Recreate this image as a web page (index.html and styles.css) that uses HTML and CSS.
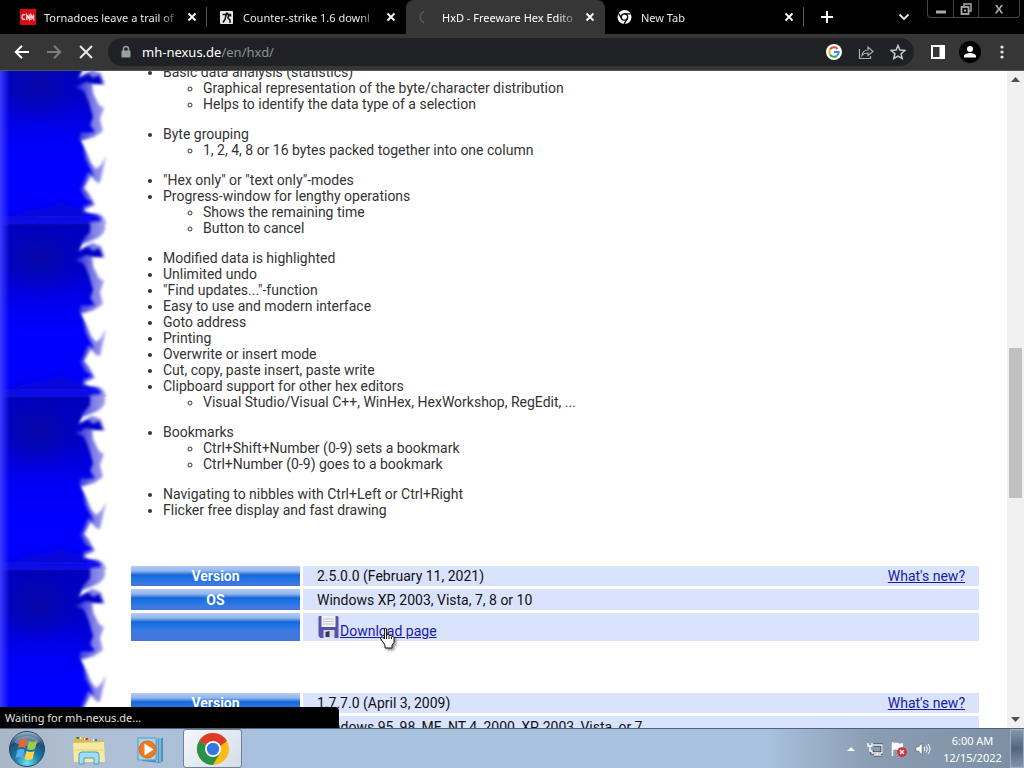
FILE: index.html
```html
<!DOCTYPE html>
<html lang="en">

<head>
    <meta charset="UTF-8">
    <meta name="viewport" content="width=device-width, initial-scale=1.0">
    <title>HxD - Freeware Hex Editor</title>
    <link rel="stylesheet" href="styles.css">
</head>

<body>
    <!-- tabs -->
    <header class="tabstrip">
        <div class="tab line">
            <svg class="favicon" viewBox="0 0 16 16"><rect width="16" height="16" fill="#d80a14"/><g fill="none" stroke="#ffd9d9" stroke-width="1.400"><path d="M5.200 5.800C3 5 2 6.500 2 8s1 3 3.200 2.200"/><path d="M6.800 11V6l2.500 4V5.500M11 11V6l2.500 4V5.500"/></g></svg>
            <span class="title">Tornadoes leave a trail of</span>
            <button class="close" aria-label="Close tab"><svg viewBox="0 0 10 10"><path d="M1.500 1.500l7 7M8.500 1.500l-7 7"/></svg></button>
        </div>
        <div class="tab">
            <svg class="favicon" viewBox="0 0 16 16"><rect x="1" y="2" width="13" height="13" rx="1" fill="#e8e8e8"/><circle cx="8" cy="4.500" r="1.300" fill="#111"/><path d="M3.500 5.500h8v1.300H9.500L9 9l2 2v3M7 6l-.8 4L4 13.500" fill="none" stroke="#111" stroke-width="1.500"/></svg>
            <span class="title">Counter-strike 1.6 downl</span>
            <button class="close" aria-label="Close tab"><svg viewBox="0 0 10 10"><path d="M1.500 1.500l7 7M8.500 1.500l-7 7"/></svg></button>
        </div>
        <div class="tab active">
            <svg class="favicon" viewBox="0 0 16 16"><path d="M6 2.500C1 5 1 11 6 14" fill="none" stroke="#55585c" stroke-width="1.500"/></svg>
            <span class="title">HxD - Freeware Hex Edito</span>
            <button class="close" aria-label="Close tab"><svg viewBox="0 0 10 10"><path d="M1.500 1.500l7 7M8.500 1.500l-7 7"/></svg></button>
        </div>
        <div class="tab line">
            <svg class="favicon" viewBox="0 0 16 16"><circle cx="7.500" cy="8" r="7" fill="#fff"/><circle cx="7.500" cy="8" r="3.200" fill="#fff" stroke="#000" stroke-width="1.300"/><path d="M7.500 4.800h6.200M4.700 9.600L1.600 4.300M10.300 9.600l-3.200 5.300" stroke="#000" stroke-width="1.300"/></svg>
            <span class="title">New Tab</span>
            <button class="close" aria-label="Close tab"><svg viewBox="0 0 10 10"><path d="M1.500 1.500l7 7M8.500 1.500l-7 7"/></svg></button>
        </div>
        <button class="newTab" aria-label="New tab"><svg viewBox="0 0 14 14"><path d="M7 1v12M1 7h12" stroke="#fff" stroke-width="2"/></svg></button>
        <button class="search" aria-label="Search tabs"><svg viewBox="0 0 12 12"><path d="M1.500 3.500L6 8l4.500-4.500" fill="none" stroke="#e8e8e8" stroke-width="1.800"/></svg></button>
        <div class="winBtns">
            <button aria-label="Minimize"><svg viewBox="0 0 14 14"><path d="M2 10h10" stroke="#aaa" stroke-width="3"/></svg></button>
            <button aria-label="Restore"><svg viewBox="0 0 14 14"><path d="M5 4V2h7v7h-2" fill="none" stroke="#aaa" stroke-width="1.500"/><rect x="2.500" y="5" width="7" height="7" fill="none" stroke="#aaa" stroke-width="1.800"/><rect x="5" y="7.500" width="2" height="2" fill="#aaa"/></svg></button>
            <button class="wide" aria-label="Close"><svg viewBox="0 0 14 14"><path d="M3 3h2l2 3 2-3h2L8.200 7l3 4.500h-2L7 8.300l-2.200 3.200h-2L5.800 7z" fill="#aaa"/></svg></button>
        </div>
    </header>

    <!-- toolbar -->
    <nav class="toolbar">
        <button class="tool" aria-label="Back"><svg viewBox="0 0 16 16"><path d="M15 8H2M8 1.800L1.800 8 8 14.200" fill="none" stroke="#fff" stroke-width="2"/></svg></button>
        <button class="tool" aria-label="Forward"><svg viewBox="0 0 16 16"><path d="M1 8h13M8 1.800L14.200 8 8 14.200" fill="none" stroke="#7d7d7d" stroke-width="2"/></svg></button>
        <button class="tool" aria-label="Stop"><svg viewBox="0 0 16 16"><path d="M2 2l12 12M14 2L2 14" stroke="#e8e8e8" stroke-width="2"/></svg></button>
        <div class="omnibox">
            <svg class="lock" viewBox="0 0 12 14"><path d="M3.500 6V4a2.500 2.500 0 0 1 5 0v2" fill="none" stroke="#9a9da1" stroke-width="1.500"/><rect x="1.500" y="5.500" width="9" height="7" rx="1" fill="#9a9da1"/></svg>
            <a class="url" href="#"><b>mh-nexus.de</b>/en/hxd/</a>
            <button class="tool" aria-label="Google search"><svg viewBox="0 0 16 16"><circle cx="8" cy="8" r="8" fill="#fff"/><g fill="none" stroke-width="2"><path d="M11.500 4.700A4.800 4.800 0 0 0 4 5.500" stroke="#ea4335"/><path d="M4 5.500a4.800 4.800 0 0 0 0 5" stroke="#fbbc05"/><path d="M4 10.500a4.800 4.800 0 0 0 7 1.200" stroke="#34a853"/><path d="M11 11.700A4.700 4.700 0 0 0 12.700 8H8" stroke="#4285f4"/></g></svg></button>
            <button class="tool" aria-label="Share"><svg viewBox="0 0 16 16"><path d="M1.500 5v9.500h11V12M4 11.500c.5-4 3-5.500 6-5.500V3l5 4.500-5 4V9C7.500 9 5.500 9.500 4 11.500z" fill="none" stroke="#aaadb1" stroke-width="1.200"/></svg></button>
            <button class="tool" aria-label="Bookmark"><svg viewBox="0 0 16 16"><path d="M8 1.500l1.900 4.600 4.900.4-3.700 3.200 1.100 4.800L8 12l-4.200 2.500 1.100-4.800L1.200 6.500l4.900-.4z" fill="none" stroke="#c6c8cb" stroke-width="1.500"/></svg></button>
        </div>
        <button class="tool" aria-label="Side panel"><svg viewBox="0 0 16 16"><path d="M1 1h14v14H1zM3 3v10h6.500V3z" fill="#fff" fill-rule="evenodd"/></svg></button>
        <button class="tool" aria-label="Profile"><svg class="avatar" viewBox="0 0 22 22"><circle cx="11" cy="11" r="11"/><circle cx="11" cy="8" r="3" fill="#fff"/><path d="M5 16.500v-1.500c0-2 4-3 6-3s6 1 6 3v1.500z" fill="#fff"/></svg></button>
        <button class="tool" aria-label="Menu"><svg viewBox="0 0 16 16"><g fill="#e8e8e8"><circle cx="8" cy="3" r="1.600"/><circle cx="8" cy="8" r="1.600"/><circle cx="8" cy="13" r="1.600"/></g></svg></button>
    </nav>

    <!-- web page -->
    <div class="viewport">
        <svg class="flames" aria-hidden="true">
            <defs>
                <linearGradient id="down" x1="0" y1="0" x2="0" y2="1">
                    <stop offset="0" stop-color="#0a0ad8"/>
                    <stop offset=".06" stop-color="#0505c0"/>
                    <stop offset=".28" stop-color="#0404c8"/>
                    <stop offset=".5" stop-color="#0202f4"/>
                    <stop offset=".65" stop-color="#0000ff"/>
                    <stop offset=".9" stop-color="#0202fa"/>
                    <stop offset=".95" stop-color="#1212e4"/>
                    <stop offset="1" stop-color="#0808c0"/>
                </linearGradient>
                <linearGradient id="halo" gradientUnits="userSpaceOnUse" x1="78" y1="0" x2="108" y2="0">
                    <stop offset="0" stop-color="#3030dd"/>
                    <stop offset=".5" stop-color="#7c7ce6"/>
                    <stop offset="1" stop-color="#a8a8ee"/>
                </linearGradient>
                <radialGradient id="shade">
                    <stop offset="0" stop-color="#0808a0" stop-opacity=".8"/>
                    <stop offset="1" stop-color="#0808b0" stop-opacity="0"/>
                </radialGradient>
                <linearGradient id="left">
                    <stop offset="0" stop-color="#3c3cff"/>
                    <stop offset=".5" stop-color="#3030ff" stop-opacity=".6"/>
                    <stop offset="1" stop-color="#2020ff" stop-opacity="0"/>
                </linearGradient>
                <filter id="soft" x="-20%" y="-20%" width="140%" height="140%"><feGaussianBlur stdDeviation="1.500"/></filter>
                <filter id="softer" x="-50%" y="-50%" width="200%" height="200%"><feGaussianBlur stdDeviation="2.500"/></filter>
                <pattern id="tile" width="120" height="173" y="-20" patternUnits="userSpaceOnUse">
                    <rect width="120" height="173" fill="#fff"/>
                    <!-- pale halo, then the solid flame -->
                    <path filter="url(#soft)" fill="url(#halo)" d="M-9-8H105V6Q102 13 93 16L82 20 77 28 92 19 101 22 105 34 92 30 93 42 99 54 104 57 100 68 103 80 94 86 80 90 86 100 91 112 96 118 101 114 106 105 100 132 96 131 91 125 84 137 89 143 95 154 83 159 90 163Q108 160 106 180H-9z"/>
                    <path filter="url(#soft)" fill="url(#down)" d="M-9-8H90L90 8 82 17 78 28 88 23 93 27 99 24 103 33 94 33 86 31 75 36 84 40 89 52 93 66 90 74 95 81 86 82 81 81 79 87 83 96 85 108 90 117 94 125 88 121 85 128 80 138 85 147 93 152 83 155 82 162Q102 163 101 170L90 171 89 181H-9z"/>
                    <ellipse cx="38" cy="34" rx="46" ry="40" fill="url(#shade)"/>
                    <path filter="url(#softer)" fill="#1010bb" opacity=".5" d="M0 166Q30 159 54 155L60 150 67 155 84 158V167z"/>
                    <path d="M8 0H88" stroke="#0505a0" stroke-width="3" opacity=".6"/>
                    <rect width="10" height="173" fill="url(#left)"/>
                </pattern>
            </defs>
            <rect width="120" height="100%" fill="url(#tile)"/>
        </svg>
        <main class="content">
            <ul>
                <li>Basic data analysis (statistics)
                    <ul>
                        <li>Graphical representation of the byte/character distribution</li>
                        <li>Helps to identify the data type of a selection</li>
                    </ul>
                </li>
                <li>Byte grouping
                    <ul>
                        <li>1, 2, 4, 8 or 16 bytes packed together into one column</li>
                    </ul>
                </li>
                <li>"Hex only" or "text only"-modes</li>
                <li>Progress-window for lengthy operations
                    <ul>
                        <li>Shows the remaining time</li>
                        <li>Button to cancel</li>
                    </ul>
                </li>
                <li>Modified data is highlighted</li>
                <li>Unlimited undo</li>
                <li>"Find updates..."-function</li>
                <li>Easy to use and modern interface</li>
                <li>Goto address</li>
                <li>Printing</li>
                <li>Overwrite or insert mode</li>
                <li>Cut, copy, paste insert, paste write</li>
                <li>Clipboard support for other hex editors
                    <ul>
                        <li>Visual Studio/Visual C++, WinHex, HexWorkshop, RegEdit, ...</li>
                    </ul>
                </li>
                <li>Bookmarks
                    <ul>
                        <li>Ctrl+Shift+Number (0-9) sets a bookmark</li>
                        <li>Ctrl+Number (0-9) goes to a bookmark</li>
                    </ul>
                </li>
                <li>Navigating to nibbles with Ctrl+Left or Ctrl+Right</li>
                <li>Flicker free display and fast drawing</li>
            </ul>

            <table>
                <tr>
                    <th scope="row">Version</th>
                    <td><a class="news" href="#">What's new?</a>2.5.0.0 (February 11, 2021)</td>
                </tr>
                <tr class="os">
                    <th scope="row">OS</th>
                    <td>Windows XP, 2003, Vista, 7, 8 or 10</td>
                </tr>
                <tr class="download">
                    <th></th>
                    <td>
                        <div class="dl">
                            <svg class="disk" viewBox="0 0 22 24"><path d="M1 2q0-1 1-1h18l1 1v21H3l-2-2z" fill="#5a50ad"/><path d="M4 1h14v11H4z" fill="#f2f2f4"/><path d="M5.500 4h11M5.500 6.500h11M5.500 9h11" stroke="#c4c4d0"/><path d="M6 15h11v8H6z" fill="#d8dce4"/><path d="M8 17l4-1v6H8z" fill="#38384a"/></svg>
                            <a href="#">Download page</a>
                        </div>
                    </td>
                </tr>
            </table>

            <table>
                <tr>
                    <th scope="row">Version</th>
                    <td><a class="news" href="#">What's new?</a>1.7.7.0 (April 3, 2009)</td>
                </tr>
                <tr class="os">
                    <th scope="row">OS</th>
                    <td>Windows 95, 98, ME, NT 4, 2000, XP, 2003, Vista, or 7</td>
                </tr>
            </table>
        </main>
        <div class="scrollbar">
            <button aria-label="Scroll up"><svg viewBox="0 0 9 5"><path d="M0 5l4.500-5L9 5z"/></svg></button>
            <div class="track"><div class="thumb"></div></div>
            <button aria-label="Scroll down"><svg viewBox="0 0 9 5"><path d="M0 0l4.500 5L9 0z"/></svg></button>
        </div>
        <div class="status">Waiting for mh-nexus.de...</div>
    </div>

    <!-- taskbar -->
    <footer class="taskbar">
        <button class="task" aria-label="Start">
            <svg class="big" viewBox="0 0 36 36">
                <defs><radialGradient id="orb" cx=".5" cy=".9" r=".9"><stop offset="0" stop-color="#6fe3f4"/><stop offset=".4" stop-color="#187ca8"/><stop offset=".75" stop-color="#1f4d74"/><stop offset="1" stop-color="#a8c0d0"/></radialGradient></defs>
                <circle cx="18" cy="18" r="17.500" fill="url(#orb)" stroke="#29475f"/>
                <path d="M5 11a15 12 0 0 1 26 0Q18 19 5 11z" fill="#fff" opacity=".3"/>
                <path d="M11 9q4-2 7 0l-2 8q-3-2-7 0z" fill="#f0642d"/><path d="M20 10q3 2 8 0l-2 8q-4 2-8 0z" fill="#9ccc48"/>
                <path d="M8.500 19q4-2 7 0l-2 8q-3-2-7 0z" fill="#5aaee8"/><path d="M17.500 20q4 2 8 0l-2 8q-4 2-8 0z" fill="#fbd54a"/>
            </svg>
        </button>
        <button class="task" aria-label="Explorer">
            <svg class="big" viewBox="0 0 36 36"><path d="M3 8q0-2 2-2h8l2 3h17l1 2v18H3z" fill="#d9b75c"/><path d="M6 7h4M13 8h5M22 9h5" stroke="#fff" stroke-width="2"/><path d="M7 6v2" stroke="#268b47" stroke-width="3"/><path d="M16 7v2" stroke="#c93a2c" stroke-width="3"/><path d="M25 8v2" stroke="#386fc4" stroke-width="3"/><path d="M2 12l31-1 1 20H3z" fill="#f6e9a0"/><path d="M3 19h30" stroke="#e7d077"/><path d="M8 33v-9q0-3 3-3h14q3 0 3 3v9h-5v-6H13v6z" fill="#9fdcf5" stroke="#4c9dc7"/></svg>
        </button>
        <button class="task" aria-label="Media Player">
            <svg class="big" viewBox="0 0 36 36"><path d="M10 8l21-1v23l-3 2-18-2z" fill="#4a94bd"/><path d="M25 7v24M28 7v24" stroke="#b9def0"/><path d="M6 7h18v22H6z" fill="#a5d3e9" stroke="#5b9dc0"/><circle cx="15.500" cy="18.500" r="8.500" fill="#ef7d20" stroke="#d9631a"/><path d="M12.500 12.500v12l9-6z" fill="#fff"/></svg>
        </button>
        <button class="task current" aria-label="Chrome">
            <svg class="big" viewBox="0 0 36 36"><circle cx="18" cy="18" r="16" fill="#fbbc16"/><path d="M18 18L4.100 10A16 16 0 0 1 31.900 10z" fill="#dd3c2b"/><path d="M18 10h13.900L24 16z" fill="#dd3c2b"/><path d="M4.100 10A16 16 0 0 0 18 34l7-12-7-4z" fill="#2a9147"/><circle cx="18" cy="18" r="8" fill="#fff"/><circle cx="18" cy="18" r="6.200" fill="#3478e5"/></svg>
        </button>
        <div class="tray">
            <button aria-label="Show hidden icons"><svg viewBox="0 0 16 16"><path d="M4 10l4-4 4 4z" fill="#fff"/></svg></button>
            <button aria-label="Network"><svg viewBox="0 0 16 16"><path d="M6 4h9v8H5V9M7 14h7M10 12v2" fill="none" stroke="#333f4d" stroke-width="3"/><path d="M6 4h9v8H5V9M7 14h7M10 12v2M1 2v3h4V2M3 5v5h2" fill="none" stroke="#fff" stroke-width="1.300"/></svg></button>
            <button aria-label="Action Center"><svg viewBox="0 0 16 16"><path d="M1.500 1v14" stroke="#fff" stroke-width="1.500"/><path d="M2 2q3-1 5 0t5 0v7q-3 1-5 0t-5 0z" fill="#fff"/><circle cx="11" cy="11" r="4.800" fill="#d62b35"/><path d="M9 9l4 4M13 9l-4 4" stroke="#fff" stroke-width="1.500"/></svg></button>
            <button aria-label="Volume"><svg viewBox="0 0 16 16"><path d="M1 6h2.500L7 2v12l-3.500-4H1z" fill="#fff" stroke="#4c5a69" stroke-width=".5"/><path d="M9 6q1.500 2 0 4M11 4.500q3 3.500 0 7M13 3q4 5 0 10" fill="none" stroke="#fff"/></svg></button>
        </div>
        <div class="clock">6:00 AM<br>12/15/2022</div>
        <button class="peek" aria-label="Show desktop"></button>
    </footer>

    <svg class="cursor" viewBox="0 0 18 23"><path d="M5.500 1.500q1.500-1 2 .5v6q2-1 2.500.5 2-.7 2.500.8 2-.5 2.500 1.200v5L13 18v3H6v-3l-4.500-6.500q0-2 2-1.500l2 2z" fill="#fff" stroke="#111"/><path d="M7.500 8v4M10 9v3M12.500 10v2" stroke="#111"/></svg>
</body>

</html>
```

FILE: styles.css
```css
* {
    padding: 0;
    margin: 0;
    box-sizing: border-box;
}

body {
    height: 100vh;
    display: flex;
    flex-direction: column;
    overflow: hidden;
    position: relative;
    background-color: #fff;
    font-family: "Noto Sans", sans-serif;
    font-size: 11px;
}

button {
    border: none;
    background: none;
    display: flex;
    align-items: center;
    justify-content: center;
}

svg {
    flex: none;
}

/* tabs */
.tabstrip {
    flex: none;
    height: 34px;
    display: flex;
    padding-left: 8px;
    background-color: #000;
    color: #e8e8e8;
}

.tab {
    flex: 0 1 199px;
    min-width: 0;
    display: flex;
    align-items: center;
    padding: 0 10px 0 12px;
}

.line {
    background: linear-gradient(#555, #555) no-repeat right center / 1px 20px;
}

.active {
    background-color: #363636;
    border-radius: 8px 8px 0 0;
    color: #fff;
}

.favicon {
    width: 16px;
    height: 16px;
    margin-right: 8px;
}

.title {
    flex: 1;
    overflow: hidden;
    white-space: nowrap;
    -webkit-mask-image: linear-gradient(to left, transparent 4px, #000 28px);
    mask-image: linear-gradient(to left, transparent 4px, #000 28px);
}

.close svg {
    width: 10px;
    height: 10px;
    stroke: #fff;
    stroke-width: 1.8;
}

.newTab {
    width: 46px;
}

.newTab svg {
    width: 14px;
}

.search {
    width: 24px;
    margin-left: auto;
}

.search svg {
    width: 12px;
}

.winBtns {
    display: flex;
    height: 18px;
    margin: 0 4px 0 11px;
    border: 1px solid #444;
    border-top: none;
    border-radius: 0 0 4px 4px;
}

.winBtns button {
    width: 25px;
}

.winBtns button + button {
    border-left: 1px solid #444;
}

.winBtns .wide {
    width: 41px;
}

.winBtns svg {
    width: 14px;
}

/* toolbar */
.toolbar {
    flex: none;
    height: 37px;
    display: flex;
    align-items: center;
    padding: 0 6px;
    background-color: #363636;
    border-bottom: 1px solid #555;
}

.tool {
    width: 32px;
    height: 28px;
}

.tool svg {
    width: 16px;
    height: 16px;
}

.tool .avatar {
    width: 22px;
    height: 22px;
}

.omnibox {
    flex: 1;
    height: 28px;
    display: flex;
    align-items: center;
    margin: 0 8px 0 6px;
    padding-left: 12px;
    border-radius: 14px;
    background-color: #202124;
}

.lock {
    width: 12px;
    height: 14px;
    margin-right: 10px;
}

.url {
    flex: 1;
    font-size: 13px;
    color: #8d9094;
    text-decoration: none;
}

.url b {
    font-weight: normal;
    color: #fff;
}

/* web page */
.viewport {
    flex: 1;
    min-height: 0;
    display: flex;
    overflow: hidden;
    position: relative;
}

.flames {
    width: 120px;
    height: 100%;
}

.content {
    flex: 1;
    min-width: 0;
    margin-top: -7px;
    padding: 0 25px 0 8px;
    font-family: Roboto, sans-serif;
    font-size: 14px;
    line-height: 16px;
    color: #333;
}

.content > ul {
    padding-left: 35px;
    margin-bottom: 45px;
}

.content ul ul {
    padding-left: 40px;
    margin-bottom: 14px;
}

table {
    width: 100%;
    border-spacing: 3px;
    margin-bottom: 46px;
    color: #111;
}

th {
    width: 169px;
    height: 20px;
    color: #fff;
    background: linear-gradient(#b5cbf5, #91b5ec 5px, #1467d8 9px, #1a70e6 11px, #3c7ae0 18px, #4575d8);
}

td {
    padding: 2px 14px;
    background-color: #d9e3fd;
}

.os th {
    height: 21px;
}

.content a {
    color: #1a1aa6;
}

.news {
    float: right;
}

.download td {
    height: 28px;
    padding: 0 14px;
}

.dl {
    display: flex;
    align-items: flex-end;
}

.disk {
    width: 23px;
    height: 24px;
}

.scrollbar {
    flex: none;
    width: 17px;
    display: flex;
    flex-direction: column;
    background-color: #f1f1f1;
}

.scrollbar button {
    height: 17px;
}

.scrollbar svg {
    width: 9px;
    fill: #505050;
}

.track {
    flex: 1;
    padding: 0 2px;
}

.thumb {
    height: 24%;
    margin-top: 260px;
    background-color: #c1c1c1;
}

.status {
    position: absolute;
    left: 0;
    bottom: 0;
    width: 339px;
    height: 21px;
    padding-left: 5px;
    line-height: 21px;
    color: #e0e0e0;
    background-color: #000;
    border-top-right-radius: 4px;
}

/* taskbar */
.taskbar {
    flex: none;
    height: 40px;
    display: flex;
    border-top: 1px solid #4e6279;
    background: linear-gradient(to right, #a9b6c6, #afbfd2 80px, #a8c1de 260px, #a8c1de 75%, #8a9db2 85%, #7c8fa2);
}

.task {
    width: 61px;
}

.task:first-child {
    width: 58px;
    padding-right: 4px;
}

.current {
    margin-left: 3px;
    width: 59px;
    border: 1px solid #6f8197;
    border-radius: 3px;
    background: linear-gradient(135deg, #f4f7fa, #d5dee9);
}

.big {
    width: 36px;
    height: 36px;
}

.tray {
    display: flex;
    margin-left: auto;
}

.tray button {
    width: 24px;
}

.tray svg {
    width: 16px;
}

.clock {
    width: 75px;
    padding-top: 3px;
    text-align: center;
    line-height: 17px;
    color: #fff;
}

.peek {
    width: 14px;
    border: 1px solid #9fb0c2;
    background: linear-gradient(#8596a9, #52657a 50%, #8295aa);
}

.cursor {
    position: absolute;
    left: 379px;
    top: 627px;
    width: 18px;
    height: 23px;
    filter: drop-shadow(2px 2px 1px #0006);
}
```
